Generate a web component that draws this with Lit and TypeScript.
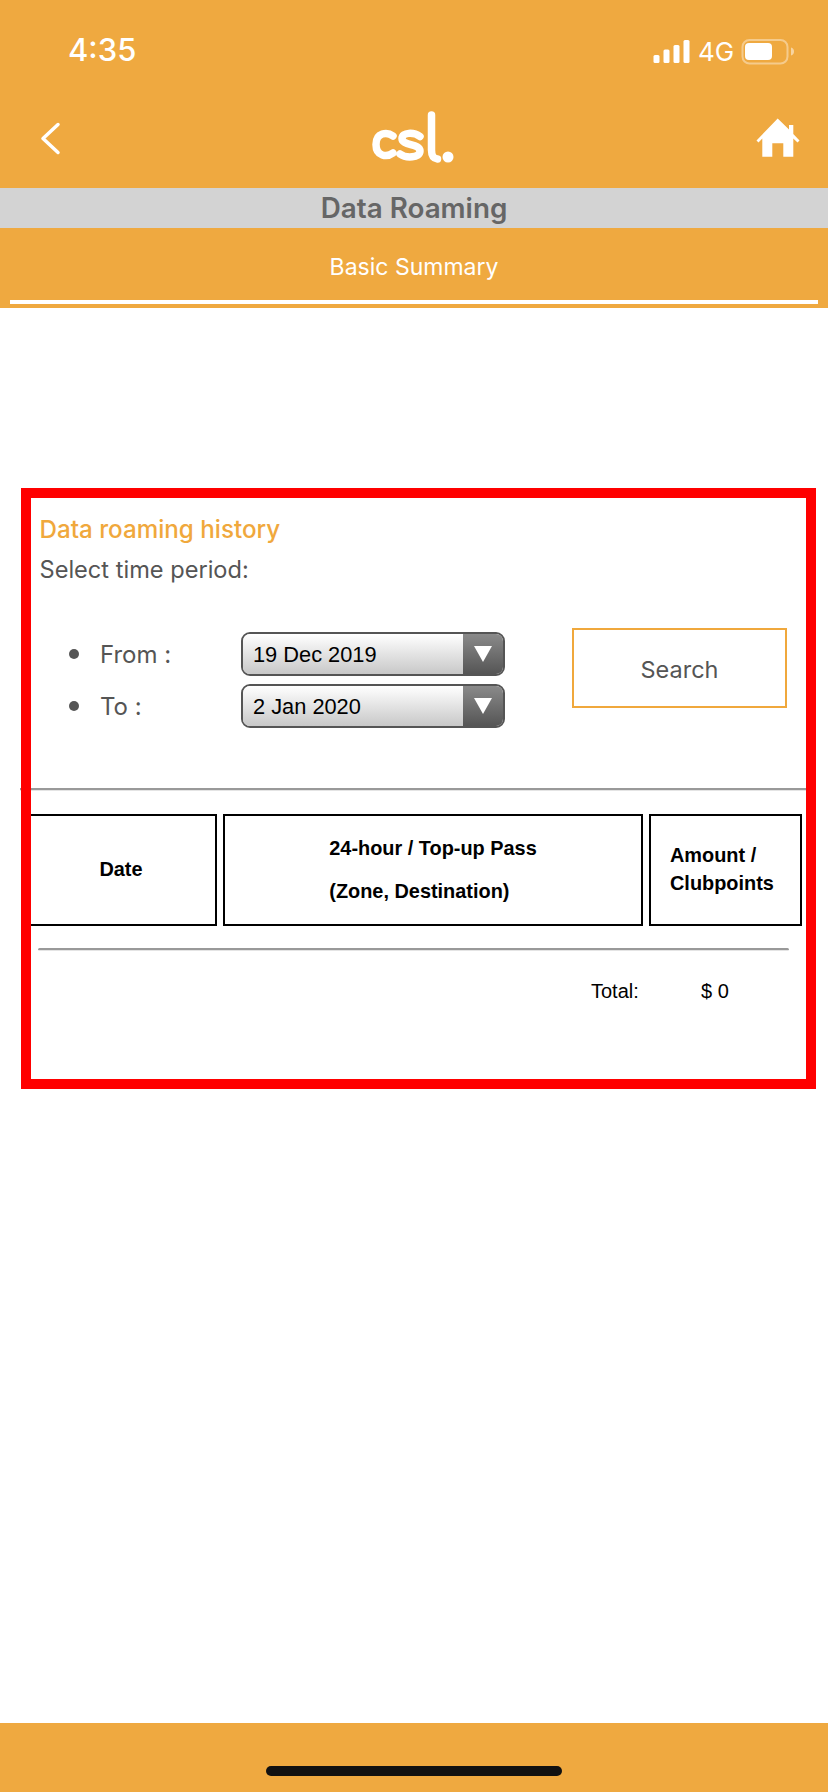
import { LitElement, html, css } from "lit";
import { customElement } from "lit/decorators.js";

@customElement("app-root")
export class AppRoot extends LitElement {
  static styles = css`
    :host { display: flex; flex-direction: column; min-height: 1792px; background: #fff; font-family: Inter, "Liberation Sans", sans-serif; }
    .head { background: #efa940; color: #fff; }
    .status { height: 100px; display: flex; align-items: center; justify-content: space-between; padding-left: 68px; box-sizing: border-box; }
    .time { font-size: 31px; font-weight: 500; line-height: 40px; }
    .status svg { display: block; }
    .nav { height: 88px; display: flex; align-items: flex-start; justify-content: space-between; }
    .nav svg { display: block; }
    .gray { height: 40px; background: #d3d3d3; color: #666; font-size: 27.800px; font-weight: 600; line-height: 40px; text-align: center; }
    .tab { height: 80px; display: flex; flex-direction: column; align-items: center; box-sizing: border-box; padding-top: 25px; }
    .tab span { font-size: 23px; line-height: 28px; height: 47px; }
    .tab i { display: block; height: 4px; width: 808px; background: #fff; }
    .frame { position: relative; box-sizing: border-box; width: 795px; height: 601px; margin: 180px 0 0 21px; padding: 22px 10px 0; }
    .frame::after { content: ""; position: absolute; inset: 0; border: 10px solid #f00; pointer-events: none; }
    .title { color: #f0a83c; font-size: 24.200px; font-weight: 500; line-height: 40px; padding-left: 8.500px; }
    .sub { color: #555; font-size: 23.600px; line-height: 40px; padding-left: 8.500px; }
    .form { display: flex; margin-top: 38px; padding-left: 38px; }
    .rows { display: flex; flex-direction: column; gap: 8px; padding-top: 4px; }
    .row { display: flex; align-items: center; height: 44px; color: #555; font-size: 24px; }
    .dot { width: 10px; height: 10px; border-radius: 50%; background: #555; margin-right: 21px; }
    .lbl { width: 141px; }
    .sel { display: flex; box-sizing: border-box; width: 264px; height: 44px; border: 2px solid #555; border-radius: 9px; overflow: hidden; }
    .val { flex: 1; padding-left: 10px; background: linear-gradient(#fff, #c8c8c8); color: #000; font: 21.800px/42px "Liberation Sans", Arial, sans-serif; }
    .arr { width: 40px; background: linear-gradient(#8a8a8a, #555); display: flex; align-items: center; justify-content: center; }
    .search { box-sizing: border-box; width: 215px; height: 80px; margin-left: 67px; border: 2px solid #f0a83c; color: #555; font-size: 23.500px; display: flex; align-items: center; justify-content: center; padding-top: 2px; }
    .hr { box-sizing: border-box; height: 3px; border-top: 2px solid #999; border-bottom: 1px solid #e4e4e4; }
    .hr1 { margin: 60px 0 0 -11px; }
    .grid { display: grid; grid-template-columns: 196px 420px 153px; gap: 6px; height: 112px; margin: 23px 4px 0 -10px; color: #000; font: bold 19.900px "Liberation Sans", Arial, sans-serif; }
    .cell { border: 2px solid #000; box-sizing: border-box; display: flex; align-items: center; justify-content: center; }
    .pass { line-height: 43px; padding-bottom: 1px; }
    .amt { line-height: 28px; justify-content: flex-start; padding-left: 19px; padding-bottom: 3px; }
    .date { padding: 0 0 2px 4px; }
    .hr2 { margin: 22px 17px 0 7px; border-radius: 2px; }
    .total { display: flex; margin-top: 25px; padding-left: 560px; color: #000; font: 20px/30px "Liberation Sans", Arial, sans-serif; }
    .total span:first-child { width: 110px; }
    .spacer { flex: 1; }
    .foot { height: 69px; background: #efa940; display: flex; align-items: flex-end; justify-content: center; padding-bottom: 16px; box-sizing: border-box; }
    .foot i { display: block; width: 296px; height: 10px; border-radius: 5px; background: #111; }
  `;

  private row(label: string, value: string) {
    return html`<div class="row"><span class="dot"></span><span class="lbl">${label}</span>
      <div class="sel"><div class="val">${value}</div><div class="arr">
        <svg width="18" height="16" viewBox="0 0 18 16"><path d="M0 0H18L9 16Z" fill="#fff"/></svg>
      </div></div></div>`;
  }

  render() {
    return html`
      <div class="head">
        <div class="status">
          <span class="time">4:35</span>
          <svg width="180" height="30" viewBox="648 33 180 30" fill="#fff">
            <rect x="653.5" y="53" width="6" height="8" rx="1.5"/>
            <rect x="663.5" y="47.5" width="6" height="13.5" rx="1.5"/>
            <rect x="673.5" y="43" width="6" height="18" rx="1.5"/>
            <rect x="683.5" y="38" width="6" height="23" rx="1.5"/>
            <text x="698" y="58.5" font-size="26" font-family="Inter, sans-serif">4G</text>
            <rect x="742.5" y="38" width="45" height="23.5" rx="7" fill="none" stroke="#fff" stroke-opacity=".4" stroke-width="2"/>
            <rect x="745" y="41" width="27" height="17" rx="4"/>
            <path d="M791 45.5c2 .6 3 2 3 4s-1 3.400-3 4z" fill-opacity=".5"/>
          </svg>
        </div>
        <div class="nav">
          <svg width="200" height="88" viewBox="0 100 200 88" fill="none">
            <path d="M58 124.500L43 138.500L58 152.500" stroke="#fff" stroke-width="3.500" stroke-linecap="round" stroke-linejoin="round"/>
          </svg>
          <svg width="100" height="88" viewBox="364 100 100 88" fill="none" stroke="#fff" stroke-width="7.500" stroke-linecap="round">
            <path d="M393 136C387 131.500 376 132.500 376 144.500C376 156.500 387 157.500 393 153"/>
            <path d="M420 136.500C414 132 402 132 402 138.500C402 146 420 143 420 151C420 158 406 158.500 400 154"/>
            <path d="M431.500 115V150C431.500 156 433.500 158.500 437.500 159"/>
            <circle cx="448" cy="157" r="5.500" fill="#fff" stroke="none"/>
          </svg>
          <svg width="200" height="88" viewBox="628 100 200 88" fill="#fff">
            <path d="M777.700 118.500L789 129.500V125H793.300V134L799.500 140.500L797.500 142.500L793.300 138.500V156.700H783.300V143.300H772.300V156.700H762.300V138.500L758.500 142.500L756.500 140.500Z"/>
          </svg>
        </div>
        <div class="gray">Data Roaming</div>
        <div class="tab"><span>Basic Summary</span><i></i></div>
      </div>
      <div class="frame">
        <div class="title">Data roaming history</div>
        <div class="sub">Select time period:</div>
        <div class="form">
          <div class="rows">${this.row("From :", "19 Dec 2019")}${this.row("To :", "2 Jan 2020")}</div>
          <div class="search">Search</div>
        </div>
        <div class="hr hr1"></div>
        <div class="grid">
          <div class="cell date">Date</div>
          <div class="cell pass"><div>24-hour / Top-up Pass<br />(Zone, Destination)</div></div>
          <div class="cell amt"><div>Amount /<br />Clubpoints</div></div>
        </div>
        <div class="hr hr2"></div>
        <div class="total"><span>Total:</span><span>$ 0</span></div>
      </div>
      <div class="spacer"></div>
      <div class="foot"><i></i></div>
    `;
  }
}
